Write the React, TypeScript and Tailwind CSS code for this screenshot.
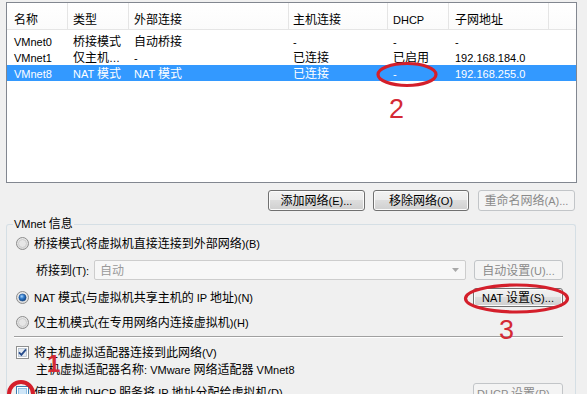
import React from "react";

const CJK = /([\u2e80-\u9fff\uff00-\uffef\u3000-\u303f]+)/;

function Tx({ s }: { s: string }) {
  const parts = s.split(CJK).filter((p) => p.length > 0);
  return (
    <span className="whitespace-pre">
      {parts.map((p, i) =>
        CJK.test(p) ? (
          <span key={i} className="text-[12px]">
            {p}
          </span>
        ) : (
          <span key={i} className="text-[11px]">
            {p}
          </span>
        )
      )}
    </span>
  );
}

const colCls = [
  "w-[61px] pl-[7px]",
  "w-[61px] pl-[5px]",
  "w-[160px] pl-[5px]",
  "w-[99px] pl-[4px]",
  "w-[61px] pl-[5px]",
  "w-[100px] pl-[6px]",
];

const headers = ["名称", "类型", "外部连接", "主机连接", "DHCP", "子网地址"];

const rows: { cells: string[]; sel?: boolean }[] = [
  { cells: ["VMnet0", "桥接模式", "自动桥接", "-", "-", "-"] },
  { cells: ["VMnet1", "仅主机…", "-", "已连接", "已启用", "192.168.184.0"] },
  { cells: ["VMnet8", "NAT 模式", "NAT 模式", "已连接", "-", "192.168.255.0"], sel: true },
];

function Btn({ label, disabled, className }: { label: string; disabled?: boolean; className: string }) {
  return (
    <div
      className={
        "flex items-center justify-center rounded-[3px] border leading-[16px] " +
        (disabled
          ? "border-[#c2c5c8] bg-[#f4f4f4] text-[#8a8a8a] "
          : "border-[#707070] bg-[linear-gradient(#f2f2f2_0%,#ebebeb_49%,#dddddd_50%,#cfcfcf_100%)] text-black shadow-[inset_0_0_0_1px_#fbfbfb] ") +
        className
      }
    >
      <Tx s={label} />
    </div>
  );
}

function Radio({ checked }: { checked?: boolean }) {
  return (
    <svg width="13" height="13" viewBox="0 0 13 13" className="shrink-0">
      <defs>
        <radialGradient id="rg" cx="50%" cy="40%" r="60%">
          <stop offset="0%" stopColor="#ffffff" />
          <stop offset="100%" stopColor="#d6d6d6" />
        </radialGradient>
        <radialGradient id="dot" cx="40%" cy="35%" r="70%">
          <stop offset="0%" stopColor="#a9d4fb" />
          <stop offset="45%" stopColor="#2f79c9" />
          <stop offset="100%" stopColor="#0d3c79" />
        </radialGradient>
      </defs>
      <circle cx="6.5" cy="6.5" r="6" fill="url(#rg)" stroke="#8d8d8d" />
      {checked ? (
        <circle cx="6.5" cy="6.5" r="3.6" fill="url(#dot)" stroke="#1c4f8e" strokeWidth="0.6" />
      ) : (
        <circle cx="6.5" cy="6.5" r="4" fill="#e6e6e6" stroke="#c4c4c4" strokeWidth="0.8" />
      )}
    </svg>
  );
}

function Check({ checked, hover }: { checked?: boolean; hover?: boolean }) {
  return (
    <svg width="13" height="13" viewBox="0 0 13 13" className="shrink-0">
      <rect x="0.5" y="0.5" width="12" height="12" fill="#ffffff" stroke={hover ? "#3c7fb1" : "#8e8f8f"} />
      <rect x="2.5" y="2.5" width="8" height="8" fill={hover ? "#cfe6f8" : "#e3e9ef"} stroke={hover ? "#79b3de" : "#b4bfcb"} strokeWidth="0.8" />
      {checked && <path d="M3 6.3 L5.4 8.8 L10 3.4" stroke="#264b8c" strokeWidth="1.8" fill="none" />}
    </svg>
  );
}

export default function App() {
  return (
    <div className="relative h-[394px] w-[587px] overflow-hidden bg-[#f0f0f0] text-black [font-family:'Liberation_Sans','Noto_Sans_CJK_SC',sans-serif]">
      <div className="flex h-full flex-col pl-[6px] pt-[2px]">
        {/* List view */}
        <div className="flex h-[181px] w-[571px] shrink-0 flex-col border border-[#828790] bg-white">
          <div className="flex h-[27px] shrink-0 border-b border-[#e5e5e5] bg-[linear-gradient(#ffffff,#fbfbfb)]">
            {headers.map((h, i) => (
              <div
                key={i}
                className={"flex items-center whitespace-nowrap border-r border-[#e5e5e5] pt-[6px] leading-[16px] " + colCls[i]}
              >
                <Tx s={h} />
              </div>
            ))}
          </div>
          <div className="flex flex-col pt-[3px]">
            {rows.map((r, ri) => (
              <div
                key={ri}
                className={"flex h-[16px] items-center leading-[16px] " + (r.sel ? "bg-[#3399ff] text-white" : "")}
              >
                {r.cells.map((c, ci) => (
                  <div key={ci} className={"overflow-hidden whitespace-nowrap " + colCls[ci]}>
                    <Tx s={c} />
                  </div>
                ))}
              </div>
            ))}
          </div>
        </div>

        {/* Buttons */}
        <div className="mt-[7px] flex w-[571px] shrink-0 justify-end pr-[2px]">
          <Btn label="添加网络(E)..." className="h-[21px] w-[97px]" />
          <Btn label="移除网络(O)" className="ml-[8px] h-[21px] w-[96px]" />
          <Btn label="重命名网络(A)..." disabled className="ml-[9px] h-[21px] w-[97px]" />
        </div>

        {/* Group box */}
        <div className="relative mt-[13px] flex w-[570px] flex-1 flex-col rounded-t-[3px] border border-b-0 border-[#d5dfe5] pl-[9px] pr-[12px] pt-[9px] leading-[16px]">
          <div className="absolute -top-[10px] left-[6px] bg-[#f0f0f0] px-[1px] leading-[16px]">
            <Tx s="VMnet 信息" />
          </div>

          <div className="flex h-[18px] items-center gap-[5px]">
            <Radio />
            <div className="whitespace-nowrap">
              <Tx s="桥接模式(将虚拟机直接连接到外部网络)(B)" />
            </div>
          </div>

          <div className="mt-[8px] flex h-[20px] items-center pl-[20px]">
            <div className="w-[58px] whitespace-nowrap">
              <Tx s="桥接到(T):" />
            </div>
            <div className="flex h-[20px] w-[372px] items-center justify-between rounded-[2px] border border-[#cdcdcd] bg-[#f7f7f7] pl-[5px] pr-[6px] text-[#9a9a9a]">
              <Tx s="自动" />
              <svg width="7" height="4" viewBox="0 0 7 4">
                <path d="M0 0 H7 L3.5 4 Z" fill="#a8a8a8" />
              </svg>
            </div>
            <Btn label="自动设置(U)..." disabled className="ml-[8px] h-[20px] w-[89px]" />
          </div>

          <div className="mt-[7px] flex h-[20px] items-center justify-between">
            <div className="flex items-center gap-[5px]">
              <Radio checked />
              <div className="whitespace-nowrap">
                <Tx s="NAT 模式(与虚拟机共享主机的 IP 地址)(N)" />
              </div>
            </div>
            <Btn label="NAT 设置(S)..." className="h-[19px] w-[90px]" />
          </div>

          <div className="mt-[6px] flex h-[18px] items-center gap-[5px]">
            <Radio />
            <div className="whitespace-nowrap">
              <Tx s="仅主机模式(在专用网络内连接虚拟机)(H)" />
            </div>
          </div>

          <div className="ml-[-2px] mt-[5px] h-[2px] border-b border-t border-b-white border-t-[#a0a0a0]" />

          <div className="mt-[5px] flex h-[18px] items-center gap-[5px]">
            <Check checked />
            <div className="whitespace-nowrap">
              <Tx s="将主机虚拟适配器连接到此网络(V)" />
            </div>
          </div>

          <div className="flex h-[16px] items-center whitespace-nowrap pl-[20px]">
            <Tx s="主机虚拟适配器名称: VMware 网络适配器 VMnet8" />
          </div>

          <div className="mt-[5px] flex h-[20px] items-start justify-between">
            <div className="flex h-[20px] items-center gap-[5px]">
              <Check hover />
              <div className="whitespace-nowrap">
                <Tx s="使用本地 DHCP 服务将 IP 地址分配给虚拟机(D)" />
              </div>
            </div>
            <Btn label="DHCP 设置(P)..." disabled className="mt-[1px] h-[20px] w-[90px]" />
          </div>
        </div>
      </div>

      {/* Annotations */}
      <svg className="pointer-events-none absolute left-0 top-0" width="587" height="394" viewBox="0 0 587 394">
        <ellipse cx="407" cy="74.5" rx="29" ry="11" fill="none" stroke="#d41f2b" strokeWidth="3.2" />
        <ellipse cx="516.5" cy="298.5" rx="51" ry="13.5" fill="none" stroke="#d41f2b" strokeWidth="3.2" />
        <circle cx="21" cy="394" r="12" fill="none" stroke="#d41f2b" strokeWidth="4" />
      </svg>
      <span className="pointer-events-none absolute left-[389px] top-[96px] text-[27px] leading-none text-[#d42a35]">2</span>
      <span className="pointer-events-none absolute left-[499px] top-[317px] text-[27px] leading-none text-[#d42a35]">3</span>
      <span className="pointer-events-none absolute left-[47px] top-[352px] text-[24px] font-bold leading-none text-[#d42a35]">1</span>
    </div>
  );
}
